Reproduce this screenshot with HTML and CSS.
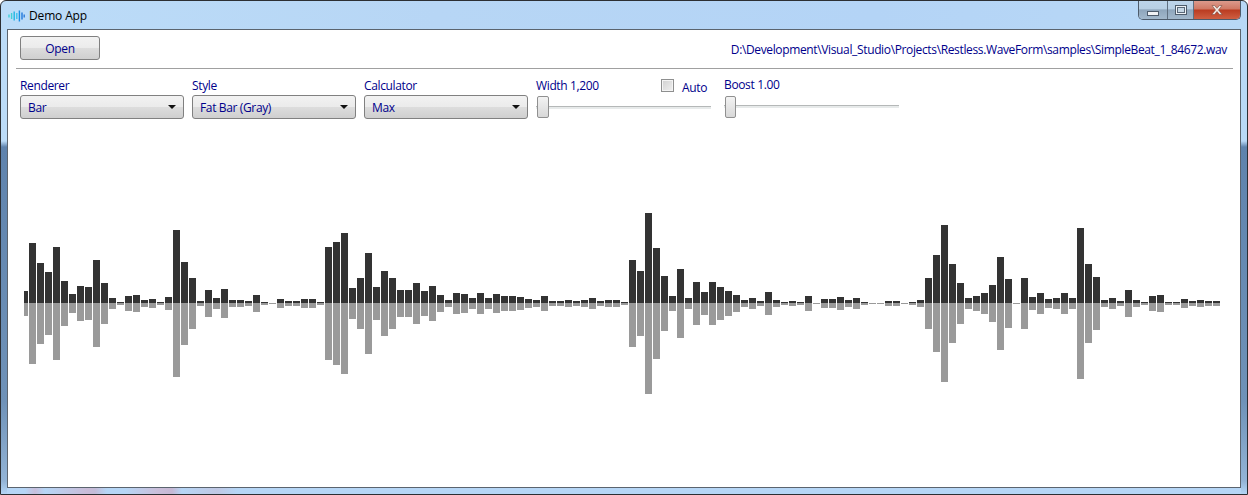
FILE: index.html
```html
<!DOCTYPE html>
<html lang="en">
<head>
<meta charset="utf-8">
<title>Demo App</title>
<link rel="stylesheet" href="styles.css">
</head>
<body>
<div class="window">
  <header class="titlebar">
    <svg class="app-icon" width="17" height="12" viewBox="0 0 17 12">
      <g fill="none" stroke-width="1.4">
        <path d="M1 4.5v3M3.6 3v6" stroke="#3fd0d8"/>
        <path d="M6.2 1.5v9" stroke="#22b4e4"/>
        <path d="M8.8 3v6" stroke="#3ac4ec"/>
        <path d="M11.4 0.5v11" stroke="#1a8fe4"/>
        <path d="M14 2.5v7" stroke="#1f78dc"/>
        <path d="M16.2 4.5v3" stroke="#2a78d8"/>
      </g>
    </svg>
    <span class="app-title">Demo App</span>
    <div class="controls">
      <div class="ctl ctl-min"><span class="min-glyph"></span></div>
      <div class="ctl ctl-max"><span class="max-glyph"></span></div>
      <div class="ctl ctl-close">
        <svg width="16" height="12" viewBox="0 0 16 12"><path d="M3 1.5h2.6L8 4.3l2.4-2.8H13L9.5 6l3.7 4.5h-2.7L8 7.6l-2.5 2.9H2.8L6.5 6z" fill="#f2ebe6" stroke="#7a4a40" stroke-width=".6"/></svg>
      </div>
    </div>
  </header>
  <main class="client">
    <div class="file-row">
      <button class="btn">Open</button>
      <span class="file-path">D:\Development\Visual_Studio\Projects\Restless.WaveForm\samples\SimpleBeat_1_84672.wav</span>
    </div>
    <div class="options">
      <div class="field">
        <label class="label">Renderer</label>
        <div class="combo"><span>Bar</span><i class="arrow"></i></div>
      </div>
      <div class="field">
        <label class="label">Style</label>
        <div class="combo"><span>Fat Bar (Gray)</span><i class="arrow"></i></div>
      </div>
      <div class="field">
        <label class="label">Calculator</label>
        <div class="combo"><span>Max</span><i class="arrow"></i></div>
      </div>
      <div class="field field-width">
        <div class="width-head">
          <label class="label">Width 1,200</label>
          <div class="auto"><span class="check"></span><span class="label">Auto</span></div>
        </div>
        <div class="slider"><span class="thumb"></span></div>
      </div>
      <div class="field field-boost">
        <label class="label">Boost 1.00</label>
        <div class="slider"><span class="thumb"></span></div>
      </div>
    </div>
    <div class="wave" id="wave"></div>
  </main>
  <div class="frame-bottom"></div>
</div>
<script src="wave.js"></script>
</body>
</html>
```
FILE: styles.css
```css
* { box-sizing: border-box; }
html, body { margin: 0; padding: 0; }
body {
  width: 1248px;
  height: 495px;
  overflow: hidden;
  background: #fff;
  font-family: "Open Sans", "Noto Sans", sans-serif;
  font-size: 12px;
  letter-spacing: -0.36px;
  color: #00008b;
}
.window {
  width: 1248px;
  height: 495px;
  display: flex;
  flex-direction: column;
  border: 1px solid #2c2f33;
  border-radius: 6px 6px 0 0;
  background:
    linear-gradient(180deg, transparent 0, transparent 140px, #5f83ad 146px, #6f92b8 400px, #93b4d6 480px, #b6d8f8 494px) left top / 7px 100% no-repeat,
    linear-gradient(180deg, transparent 0, transparent 140px, #5f83ad 146px, #6f92b8 400px, #93b4d6 480px, #b6d8f8 494px) right top / 7px 100% no-repeat,
    linear-gradient(90deg, #bcdcf8 0, #b7d6f5 35%, #b4d4f6 70%, #b8d8f6 100%);
}
.titlebar {
  height: 28px;
  flex: none;
  display: flex;
  align-items: flex-start;
  padding-left: 7px;
}
.app-icon { margin-top: 9px; }
.app-title {
  margin: 6px 0 0 4px;
  color: #000;
  font-size: 12px;
  line-height: 17px;
  letter-spacing: -0.15px;
}
.controls {
  margin-left: auto;
  margin-right: 6px;
  width: 103px;
  height: 19px;
  display: flex;
  border: 1px solid #4d5b6b;
  border-top: 0;
  border-radius: 0 0 5px 5px;
  overflow: hidden;
}
.ctl {
  height: 100%;
  display: flex;
  align-items: center;
  justify-content: center;
}
.ctl-min, .ctl-max {
  background: linear-gradient(180deg, #bcd4ea 0, #b8cfe4 42%, #8fa6bc 50%, #a2b8cc 100%);
  border-right: 1px solid #5f6f80;
}
.ctl-min { width: 29px; }
.ctl-max { width: 26px; }
.ctl-close {
  flex: 1;
  background: linear-gradient(180deg, #dc9a8c 0, #d07a66 42%, #bb3d22 52%, #cf5f42 100%);
}
.min-glyph {
  width: 12px;
  height: 5px;
  margin-top: 6px;
  background: #f1f3f6;
  border: 1px solid #4e5c6c;
}
.max-glyph {
  width: 12px;
  height: 10px;
  background: #c6d6e4;
  border: 1px solid #4e5c6c;
  box-shadow: inset 0 0 0 1px #eef2f6, inset 0 0 0 2px #5a6878;
}
.client {
  flex: 1;
  min-height: 0;
  margin: 0 6px;
  background: #fff;
  border: 1px solid #5b646e;
  display: flex;
  flex-direction: column;
}
.file-row {
  height: 39px;
  margin: 0 7px 0 8px;
  padding: 6px 4px 0;
  display: flex;
  align-items: flex-start;
  justify-content: space-between;
  border-bottom: 1px solid #a0a0a0;
}
.btn {
  width: 80px;
  height: 24px;
  padding: 0;
  border: 1px solid #808080;
  border-radius: 3px;
  font: inherit;
  letter-spacing: inherit;
  color: #00008b;
  background: linear-gradient(180deg, #f2f2f2 0, #ebebeb 50%, #dddddd 50%, #cfcfcf 100%);
}
.file-path { margin: 5px 2px 0 0; line-height: 17px; }
.options {
  height: 51px;
  flex: none;
  display: flex;
  padding: 7px 0 0 12px;
}
.field {
  width: 164px;
  margin-right: 8px;
  display: flex;
  flex-direction: column;
}
.label { line-height: 19px; height: 19px; white-space: nowrap; }
.combo {
  height: 24px;
  padding: 0 8px 0 7px;
  display: flex;
  align-items: center;
  justify-content: space-between;
  border: 1px solid #808080;
  border-radius: 3px;
  background: linear-gradient(180deg, #f2f2f2 0, #ebebeb 50%, #dddddd 50%, #cfcfcf 100%);
}
.arrow {
  width: 0;
  height: 0;
  margin-right: -1px;
  border-left: 4px solid transparent;
  border-right: 4px solid transparent;
  border-top: 4px solid #111;
}
.field-width { width: 175px; margin-right: 13px; }
.width-head { display: flex; height: 19px; }
.auto {
  margin-left: auto;
  margin-top: 2px;
  display: flex;
}
.check {
  width: 13px;
  height: 13px;
  margin: 1px 8px 0 0;
  border: 1px solid #8e8f8f;
  background: linear-gradient(135deg, #d0d0d0, #f0f0f0);
  box-shadow: inset 0 0 0 1px #f4f4f4;
}
.auto .label { width: 29px; }
.slider {
  position: relative;
  height: 24px;
  background: linear-gradient(180deg, #b5b8b8 0, #b5b8b8 1px, #e7eaea 1px, #e7eaea 3px) 0 11px / 100% 3px no-repeat;
}
.thumb {
  position: absolute;
  left: 1px;
  top: 1px;
  width: 12px;
  height: 22px;
  border: 1px solid #909090;
  border-radius: 2px;
  background: linear-gradient(180deg, #f3f3f3, #d8d8d8);
}
.field-boost { width: 175px; margin-top: -1px; }
.field-boost .thumb { left: 1px; top: 2px; width: 11px; }
.wave { flex: 1; min-height: 0; }
.wave svg { display: block; }
.frame-bottom {
  height: 6px;
  flex: none;
  margin: 0 6px;
  background: linear-gradient(90deg, #b6d6f6 0, #b6d6f6 18px, #c8bfdc 28px, #b6d6f6 38px, #c9bcd8 80px, #c4bcd8 88px, #b6d6f6 100px, #b6d6f6 118px, #cabfda 150px, #c6b8d4 165px, #b6d6f6 175px, #c0c8e4 210px, #b6d6f6 230px, #b6d6f6 1248px);
}
.bar-up { fill: #333; }
.bar-down { fill: #9a9a9a; }
```
FILE: wave.js
```js
var data = [12,60,40,31,56,22,9,17,16,43,20,5,1,7,8,3,4,1,6,73,41,25,2,13,5,14,3,3,2,8,1,0,4,2,2,4,4,1,
  56,61,70,15,25,50,16,32,25,13,13,20,12,17,8,3,10,9,5,10,5,9,7,7,6,4,3,7,2,2,3,2,3,5,2,3,3,1,
  43,32,90,55,27,7,34,5,21,11,21,16,12,8,3,5,2,11,3,1,2,1,7,0,4,4,6,3,5,1,0,0,2,2,0,1,3,
  25,48,78,39,20,5,7,10,18,46,24,0,25,6,10,4,5,10,5,75,39,26,3,5,2,13,3,1,7,8,1,1,4,2,3,2,2];
var ns = "http://www.w3.org/2000/svg";
var wave = document.getElementById("wave");
var w = wave.clientWidth, h = wave.clientHeight, mid = Math.round(h / 2) - 1;
var svg = document.createElementNS(ns, "svg");
svg.setAttribute("width", w);
svg.setAttribute("height", h);
function bar(cls, x, y, bw, bh) {
  var r = document.createElementNS(ns, "rect");
  r.setAttribute("class", cls);
  r.setAttribute("x", x); r.setAttribute("y", y);
  r.setAttribute("width", bw); r.setAttribute("height", bh);
  svg.appendChild(r);
}
data.forEach(function (v, i) {
  var x = i === 0 ? 16 : 13 + 8 * i;
  var bw = i === 0 ? 4 : 7;
  if (v > 0) bar("bar-up", x, mid - v, bw, v);
  bar("bar-down", x, mid, bw, v + 1);
});
wave.appendChild(svg);
```
